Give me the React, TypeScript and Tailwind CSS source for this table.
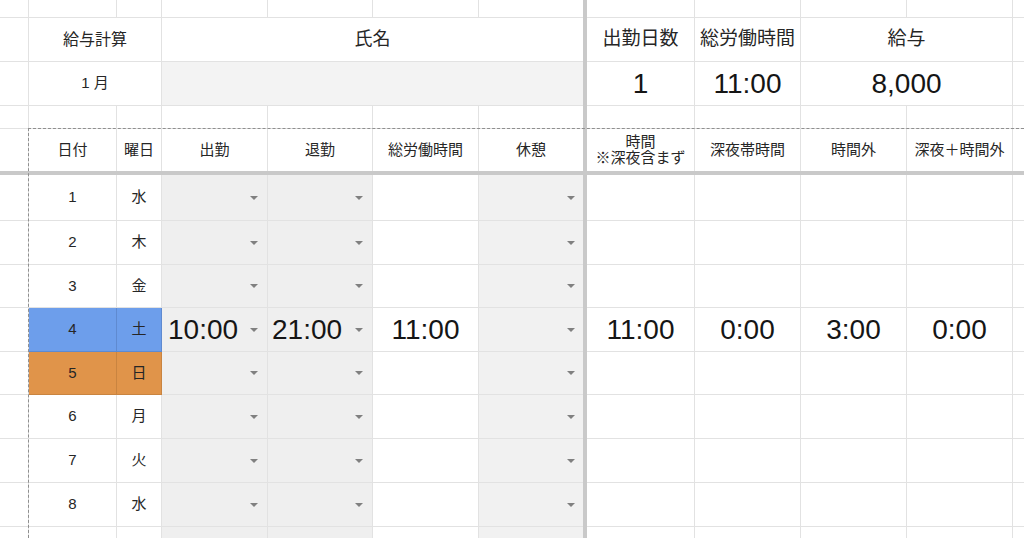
import React from "react";

const L = "border-[#e2e2e2]";

function Arrow() {
  return (
    <span className="block w-0 h-0 border-l-[4px] border-r-[4px] border-t-[4px] border-l-transparent border-r-transparent border-t-[#808080]" />
  );
}

type Day = {
  d: number;
  w: string;
  color?: "blue" | "orange";
  inT?: string;
  outT?: string;
  total?: string;
  i?: string;
  j?: string;
  k?: string;
  l?: string;
  h: string;
  blank?: boolean;
};

const days: Day[] = [
  { d: 1, w: "水", h: "h-[46px]" },
  { d: 2, w: "木", h: "h-[44px]" },
  { d: 3, w: "金", h: "h-[43px]" },
  {
    d: 4,
    w: "土",
    color: "blue",
    inT: "10:00",
    outT: "21:00",
    total: "11:00",
    i: "11:00",
    j: "0:00",
    k: "3:00",
    l: "0:00",
    h: "h-[44px]",
  },
  { d: 5, w: "日", color: "orange", h: "h-[43px]" },
  { d: 6, w: "月", h: "h-[44px]" },
  { d: 7, w: "火", h: "h-[44px]" },
  { d: 8, w: "水", h: "h-[44px]" },
  { d: 9, w: "木", h: "h-[44px]", blank: true },
];

function Sep() {
  return <div className="w-[4px] shrink-0 bg-[#c9c9c9]" />;
}

function EmptyRow({ h }: { h: string }) {
  return (
    <div className={`flex ${h}`}>
      <div className={`w-[29px] shrink-0 border-r border-b ${L}`} />
      <div className={`w-[88px] shrink-0 border-r border-b ${L}`} />
      <div className={`w-[45px] shrink-0 border-r border-b ${L}`} />
      <div className={`w-[106px] shrink-0 border-r border-b ${L}`} />
      <div className={`w-[105px] shrink-0 border-r border-b ${L}`} />
      <div className={`w-[106px] shrink-0 border-r border-b ${L}`} />
      <div className={`w-[104px] shrink-0 border-b ${L}`} />
      <Sep />
      <div className={`w-[108px] shrink-0 border-r border-b ${L}`} />
      <div className={`w-[106px] shrink-0 border-r border-b ${L}`} />
      <div className={`w-[106px] shrink-0 border-r border-b ${L}`} />
      <div className={`w-[106px] shrink-0 border-r border-b ${L}`} />
      <div className={`flex-1 border-b ${L}`} />
    </div>
  );
}

const big = "text-[28px] text-[#151515] leading-none";

export default function App() {
  return (
    <div className="relative w-[1024px] h-[538px] overflow-hidden bg-white text-[#262626] font-['Liberation_Sans','Noto_Sans_CJK_JP',sans-serif]">
      {/* row 0 */}
      <EmptyRow h="h-[18px]" />

      {/* row 1: titles */}
      <div className="flex h-[44px]">
        <div className={`w-[29px] shrink-0 border-r border-b ${L}`} />
        <div className={`w-[133px] shrink-0 border-r border-b ${L} flex items-center justify-center text-[16px]`}>
          給与計算
        </div>
        <div className={`w-[421px] shrink-0 border-b ${L} flex items-center justify-center text-[18px]`}>
          氏名
        </div>
        <Sep />
        <div className={`w-[108px] shrink-0 border-r border-b ${L} flex items-center justify-center text-[19px]`}>
          出勤日数
        </div>
        <div className={`w-[106px] shrink-0 border-r border-b ${L} flex items-center justify-center text-[19px]`}>
          総労働時間
        </div>
        <div className={`w-[212px] shrink-0 border-r border-b ${L} flex items-center justify-center text-[19px]`}>
          給与
        </div>
        <div className={`flex-1 border-b ${L}`} />
      </div>

      {/* row 2: values */}
      <div className="flex h-[44px]">
        <div className={`w-[29px] shrink-0 border-r border-b ${L}`} />
        <div className={`w-[133px] shrink-0 border-r border-b ${L} flex items-center justify-center text-[15px]`}>
          1 月
        </div>
        <div className={`w-[421px] shrink-0 border-b ${L} bg-[#f3f3f3]`} />
        <Sep />
        <div className={`w-[108px] shrink-0 border-r border-b ${L} flex items-center justify-center ${big}`}>
          1
        </div>
        <div className={`w-[106px] shrink-0 border-r border-b ${L} flex items-center justify-center ${big}`}>
          11:00
        </div>
        <div className={`w-[212px] shrink-0 border-r border-b ${L} flex items-center justify-center ${big}`}>
          8,000
        </div>
        <div className={`flex-1 border-b ${L}`} />
      </div>

      {/* row 3: blank */}
      <EmptyRow h="h-[23px]" />

      {/* row 4: headers */}
      <div className="flex h-[42px] text-[15px]">
        <div className={`w-[29px] shrink-0 border-r ${L}`} />
        <div className={`w-[88px] shrink-0 border-r ${L} flex items-center justify-center`}>日付</div>
        <div className={`w-[45px] shrink-0 border-r ${L} flex items-center justify-center`}>曜日</div>
        <div className={`w-[106px] shrink-0 border-r ${L} flex items-center justify-center`}>出勤</div>
        <div className={`w-[105px] shrink-0 border-r ${L} flex items-center justify-center`}>退勤</div>
        <div className={`w-[106px] shrink-0 border-r ${L} flex items-center justify-center`}>総労働時間</div>
        <div className={`w-[104px] shrink-0 ${L} flex items-center justify-center`}>休憩</div>
        <Sep />
        <div className={`w-[108px] shrink-0 border-r ${L} flex flex-col items-center justify-center leading-[16px]`}>
          <span>時間</span>
          <span>※深夜含まず</span>
        </div>
        <div className={`w-[106px] shrink-0 border-r ${L} flex items-center justify-center`}>深夜帯時間</div>
        <div className={`w-[106px] shrink-0 border-r ${L} flex items-center justify-center`}>時間外</div>
        <div className={`w-[106px] shrink-0 border-r ${L} flex items-center justify-center`}>深夜＋時間外</div>
        <div className="flex-1" />
      </div>

      {/* frozen horizontal line */}
      <div className="h-[4px] bg-[#c9c9c9]" />

      {/* data rows */}
      {days.map((r) => {
        const fill =
          r.color === "blue"
            ? "bg-[#6d9eeb] border-[#5f8ad0]"
            : r.color === "orange"
            ? "bg-[#e0944a] border-[#c98440]"
            : `bg-white ${L}`;
        return (
          <div key={r.d} className={`flex ${r.h}`}>
            <div className={`w-[29px] shrink-0 border-r border-b ${L}`} />
            <div className={`w-[88px] shrink-0 border-r border-b ${fill} flex items-center justify-center text-[15px]`}>
              {r.blank ? "" : r.d}
            </div>
            <div className={`w-[45px] shrink-0 border-r border-b ${fill} flex items-center justify-center text-[15px]`}>
              {r.blank ? "" : r.w}
            </div>
            <div className={`w-[106px] shrink-0 border-r border-b ${L} bg-[#efefef] flex items-center justify-between pl-[6px] pr-[9px]`}>
              <span className={big}>{r.inT ?? ""}</span>
              {!r.blank && <Arrow />}
            </div>
            <div className={`w-[105px] shrink-0 border-r border-b ${L} bg-[#efefef] flex items-center justify-between pl-[4px] pr-[9px]`}>
              <span className={big}>{r.outT ?? ""}</span>
              {!r.blank && <Arrow />}
            </div>
            <div className={`w-[106px] shrink-0 border-r border-b ${L} flex items-center justify-center ${big}`}>
              {r.total ?? ""}
            </div>
            <div className={`w-[104px] shrink-0 border-b ${L} bg-[#f1f1f1] flex items-center justify-end pr-[8px]`}>
              {!r.blank && <Arrow />}
            </div>
            <Sep />
            <div className={`w-[108px] shrink-0 border-r border-b ${L} flex items-center justify-center ${big}`}>
              {r.i ?? ""}
            </div>
            <div className={`w-[106px] shrink-0 border-r border-b ${L} flex items-center justify-center ${big}`}>
              {r.j ?? ""}
            </div>
            <div className={`w-[106px] shrink-0 border-r border-b ${L} flex items-center justify-center ${big}`}>
              {r.k ?? ""}
            </div>
            <div className={`w-[106px] shrink-0 border-r border-b ${L} flex items-center justify-center ${big}`}>
              {r.l ?? ""}
            </div>
            <div className={`flex-1 border-b ${L}`} />
          </div>
        );
      })}

      {/* copy marquee (dashed) overlay */}
      <div className="pointer-events-none absolute left-[28px] top-[128px] right-0 bottom-0 border-t border-l border-dashed border-[#8f8f8f]" />
    </div>
  );
}
